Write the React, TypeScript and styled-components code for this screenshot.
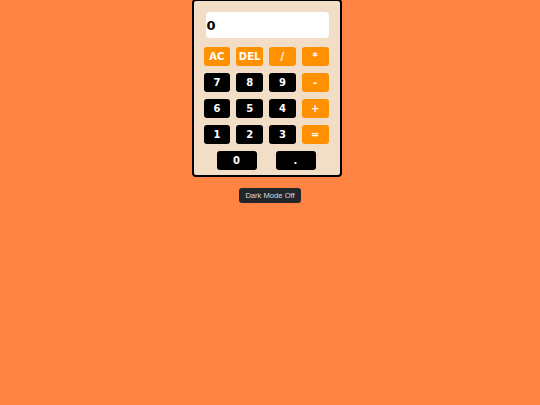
import React, { useState } from 'react';
import styled, { createGlobalStyle } from 'styled-components';

const GlobalStyle = createGlobalStyle`
  html, body {
    margin: 0;
    padding: 0;
    background: #ff8443;
    font-family: 'DejaVu Sans', 'Liberation Sans', sans-serif;
  }
`;

const ROWS = [
  [
    { label: 'AC', op: true },
    { label: 'DEL', op: true },
    { label: '/', op: true },
    { label: '*', op: true },
  ],
  [
    { label: '7' },
    { label: '8' },
    { label: '9' },
    { label: '-', op: true },
  ],
  [
    { label: '6' },
    { label: '5' },
    { label: '4' },
    { label: '+', op: true },
  ],
  [
    { label: '1' },
    { label: '2' },
    { label: '3' },
    { label: '=', op: true },
  ],
];

const App = () => {
  const [dark, setDark] = useState(false);

  return (
    <>
      <GlobalStyle />
      <Page>
        <Calculator>
          <Display>0</Display>
          <Keys>
            {ROWS.flat().map(key => (
              <Key key={key.label} $op={!!key.op}>
                {key.label}
              </Key>
            ))}
          </Keys>
          <BottomRow>
            <WideKey>0</WideKey>
            <WideKey>.</WideKey>
          </BottomRow>
        </Calculator>
        <ModeButton onClick={() => setDark(!dark)}>
          Dark Mode {dark ? 'On' : 'Off'}
        </ModeButton>
      </Page>
    </>
  );
};

export default App;

const Page = styled.div`
  display: flex;
  flex-direction: column;
  align-items: center;
  width: 100%;
`;

const Calculator = styled.div`
  box-sizing: border-box;
  width: 150px;
  margin-top: -1px;
  margin-right: 7px;
  padding: 11px 11px 5px 11px;
  background: #f2dec6;
  border: 2px solid #000;
  border-radius: 4px;
`;

const Display = styled.div`
  box-sizing: border-box;
  height: 26px;
  margin: 0 0 9px 1px;
  padding: 0 1px;
  display: flex;
  align-items: center;
  background: #fff;
  border-radius: 4px;
  font-size: 13px;
  font-weight: bold;
  color: #000;
`;

const Keys = styled.div`
  display: grid;
  grid-template-columns: repeat(4, 1fr);
  column-gap: 6px;
  row-gap: 7px;
  margin-left: -1px;
`;

const Key = styled.button<{ $op: boolean }>`
  height: 19px;
  padding: 0;
  border: none;
  border-radius: 3px;
  background: ${props => (props.$op ? '#ff9100' : '#000')};
  color: #fff;
  font-family: 'DejaVu Sans', sans-serif;
  font-size: 10px;
  font-weight: bold;
  cursor: pointer;
`;

const BottomRow = styled.div`
  display: flex;
  gap: 19px;
  margin-top: 7px;
  padding-left: 12px;
`;

const WideKey = styled(Key).attrs({ $op: false })`
  width: 40px;
`;

const ModeButton = styled.button`
  margin-top: 11px;
  padding: 0 6px;
  height: 15px;
  border: none;
  border-radius: 3px;
  background: #22262b;
  color: #dcdcdc;
  font-family: 'Liberation Sans', Arial, sans-serif;
  font-size: 7.6px;
  cursor: pointer;
`;
